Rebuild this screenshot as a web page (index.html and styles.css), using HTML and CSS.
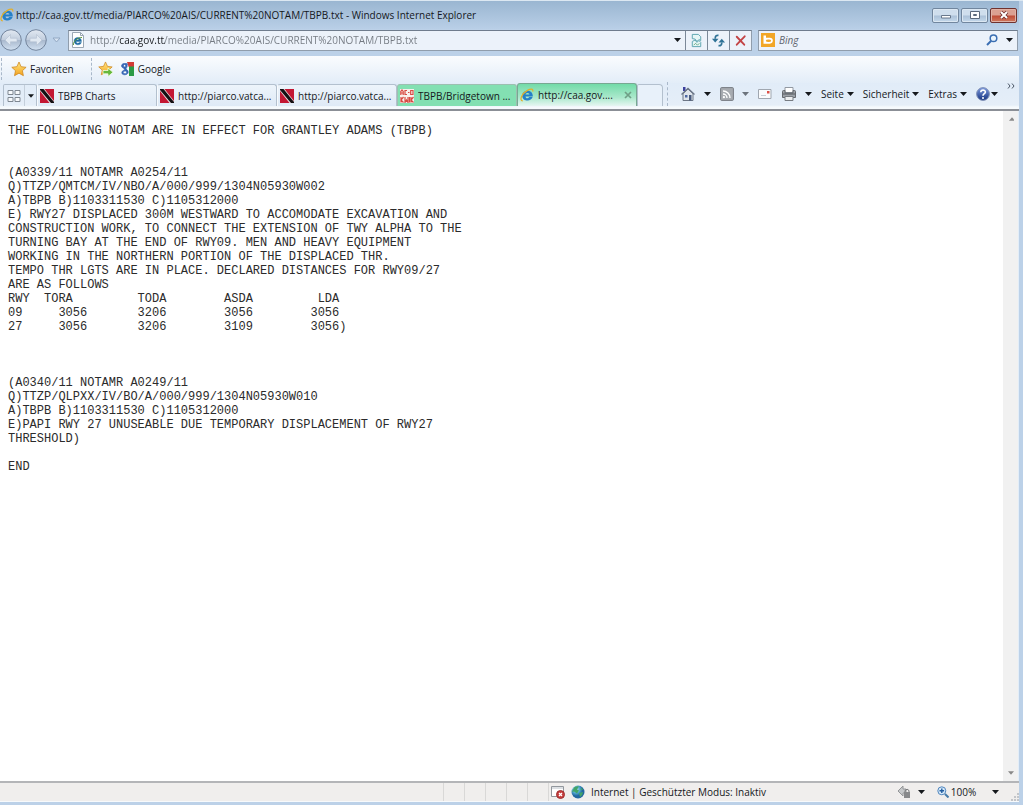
FILE: index.html
```html
<!DOCTYPE html>
<html lang="de">
<head>
<meta charset="utf-8">
<title>http://caa.gov.tt/media/PIARCO%20AIS/CURRENT%20NOTAM/TBPB.txt - Windows Internet Explorer</title>
<link rel="stylesheet" href="styles.css">
</head>
<body>
<svg class="defs" aria-hidden="true">
  <defs>
    <linearGradient id="gold" x2="0" y2="1"><stop offset="0" stop-color="#ffe985"/><stop offset="1" stop-color="#f3a01c"/></linearGradient>
    <linearGradient id="orb" x2="0" y2="1"><stop offset="0" stop-color="#e2e9f2"/><stop offset=".48" stop-color="#c3cfdf"/><stop offset=".52" stop-color="#a9b9ce"/><stop offset="1" stop-color="#d3e2f2"/></linearGradient>
    <radialGradient id="globe" cx=".35" cy=".3"><stop offset="0" stop-color="#c2ecf6"/><stop offset=".6" stop-color="#4da3cd"/><stop offset="1" stop-color="#2367a0"/></radialGradient>
    <linearGradient id="help" x2="0" y2="1"><stop offset="0" stop-color="#7d9be0"/><stop offset="1" stop-color="#15327f"/></linearGradient>
    <symbol id="ie" viewBox="0 0 16 16">
      <path d="M10.600 10.400h3.800C12.800 16.200 2.600 15.600 2.600 8.800 2.600 1 15.200 1 14.600 9.600H6.300c.3 2.600 3.400 2.700 4.300.8zM6.300 7.300h4.500c-.2-2.300-4.300-2.300-4.500 0z" fill="#2580c8"/>
      <path d="M3.200 14.600C-1.500 14.500 2.500 6 8.500 2.700c3.500-2 7-2.200 6 1.300" fill="none" stroke="#e3b02c" stroke-width="1.400"/>
    </symbol>
    <symbol id="flag" viewBox="0 0 14 14">
      <path fill="#c31733" d="M0 0h14v14H0z"/><path d="M0 0h4.500L14 12v2H9.500L0 2z" fill="#e9dfe0"/><path d="M1 0h2.500L14 13v1h-3L0 1V0z" fill="#151013"/>
    </symbol>
    <symbol id="star" viewBox="0 0 16 16"><path d="M8 1l2.100 4.700 5 .6-3.700 3.400 1 5L8 12.200l-4.500 2.500 1-5L.8 6.300l5.100-.6z" fill="url(#gold)" stroke="#cf8a25" stroke-width=".8"/></symbol>
    <symbol id="down" viewBox="0 0 7 4"><path d="M0 0h7L3.500 4z" fill="currentColor"/></symbol>
  </defs>
</svg>

<div class="window">
  <header class="titlebar">
    <svg class="i14"><use href="#ie"/></svg>
    <h1 class="title">http://caa.gov.tt/media/PIARCO%20AIS/CURRENT%20NOTAM/TBPB.txt - Windows Internet Explorer</h1>
    <div class="caption">
      <button aria-label="Minimieren"><svg viewBox="0 0 12 10"><path d="M1.500 5.500h9v2.500h-9z" fill="#fff" stroke="#69788c"/></svg></button>
      <button aria-label="Maximieren"><svg viewBox="0 0 12 10"><path d="M1.500 1.500h9v7h-9z" fill="#fff" stroke="#5c6a7c"/><path d="M4.500 4.500h3v1h-3z" fill="none" stroke="#5c6a7c"/></svg></button>
      <button class="shut" aria-label="Schließen"><svg viewBox="0 0 12 10"><path d="M3 2l6 6M9 2L3 8" stroke="#6d2b2b" stroke-width="3.500"/><path d="M3 2l6 6M9 2L3 8" stroke="#fff" stroke-width="2"/></svg></button>
    </div>
  </header>

  <div class="navbar">
    <div class="travel">
      <button class="orb" aria-label="Zurück"><svg viewBox="0 0 22 22"><circle cx="11" cy="11" r="10.300" fill="url(#orb)" stroke="#74859d"/><path d="M10.500 5.500L5 11l5.500 5.500v-3.700H17V9.200h-6.500z" fill="#e1e9f2" stroke="#b3c0d0" stroke-width=".6"/></svg></button>
      <button class="orb" aria-label="Vorwärts"><svg viewBox="0 0 22 22"><circle cx="11" cy="11" r="10.300" fill="url(#orb)" stroke="#74859d"/><path d="M11.500 5.500L17 11l-5.500 5.500v-3.700H5V9.200h6.500z" fill="#e1e9f2" stroke="#b3c0d0" stroke-width=".6"/></svg></button>
      <button class="recent" aria-label="Zuletzt besuchte Seiten"><svg class="recent-icon" viewBox="0 0 9 6"><path d="M1 1h7L4.500 5z" fill="#d6e3f2" stroke="#93a9c4"/></svg></button>
    </div>
    <div class="address">
      <svg class="i16 page-icon" viewBox="0 0 16 16"><path d="M2.500.5h8l3 3v12h-11z" fill="#fff" stroke="#9aa7b4"/><path d="M10.500.5v3h3" fill="none" stroke="#9aa7b4"/><path d="M11.500 9.500H6c.1 2 2.700 2.200 3.200 1h2.200c-1 3.400-7.400 3-7.400-1.500 0-4.700 7.700-4.700 7.500.5zM6 8h3c-.2-1.500-2.800-1.500-3 0z" fill="#1f6ca3" stroke="#1f6ca3" stroke-width=".4"/><path d="M3.500 13C2.500 10 8 5 12 5.500" fill="none" stroke="#5f9a3e"/></svg>
      <input class="url" type="text" aria-label="Adresse" value="http://caa.gov.tt/media/PIARCO%20AIS/CURRENT%20NOTAM/TBPB.txt">
      <button class="drop" aria-label="Adressliste"><svg class="arrow"><use href="#down"/></svg></button>
      <button class="cell" aria-label="Kompatibilitätsansicht"><svg viewBox="0 0 16 16"><path d="M3.500 6V1.500h6.500l2.500 2.500V8l-2-1-2 2-2-2.500zM3.500 9l3-1.500L8.500 10l2-2 2 2v4.500h-9z" fill="#e6f6f6" stroke="#5aa3ae"/><path d="M5 13l2-2 2 2 2-2" fill="none" stroke="#65aa83"/></svg></button>
      <button class="cell" aria-label="Aktualisieren"><svg viewBox="0 0 16 16"><path d="M8 2.500Q4.500 2 4.500 6M8 13.500q3.500.5 3.500-3.500" fill="none" stroke="#2f7296" stroke-width="1.800"/><path d="M1 6h7l-3.500 4zM8 10l3.500-4L15 10z" fill="#2f7296"/></svg></button>
      <button class="cell" aria-label="Stopp"><svg viewBox="0 0 16 16"><path d="M4 4l8 8.500M12.500 3.500L4 12.500" stroke="#c34446" stroke-width="2" stroke-linecap="round"/></svg></button>
    </div>
    <div class="search">
      <svg class="i14" viewBox="0 0 14 14"><path d="M0 0h14v14H0z" fill="#f2a626"/><path d="M2.500 2.500v8.200h6.300q3-.5 3-3.200T8.800 4.800H5V2.500z" fill="#fff"/><ellipse cx="7.500" cy="7.800" rx="2.700" ry="1.300" fill="#f2a626"/></svg>
      <input class="bing" type="text" placeholder="Bing" aria-label="Bing-Suche">
      <button aria-label="Suchen"><svg class="i12" viewBox="0 0 12 12"><circle cx="7.500" cy="4.300" r="3.300" fill="#e9f4fd" stroke="#3a6eb2" stroke-width="1.500"/><path d="M5 7l-4 4" stroke="#3a6eb2" stroke-width="2"/></svg></button>
      <button aria-label="Suchoptionen"><svg class="arrow"><use href="#down"/></svg></button>
    </div>
  </div>

  <div class="client">
    <div class="favbar">
      <span class="grip"></span>
      <button class="fav"><svg class="i16"><use href="#star"/></svg>Favoriten</button>
      <span class="grip"></span>
      <button class="addfav" aria-label="Zu Favoritenleiste hinzufügen"><svg class="i16" viewBox="0 0 16 16"><use href="#star" width="15" height="15"/><path d="M5 9.500h5V7l5 4.300-5 4.200v-2.700H5z" fill="#66b83c" stroke="#f2ffe6" stroke-width=".8"/></svg></button>
      <a class="link" href="http://www.google.de"><svg class="i16" viewBox="0 0 16 16"><path fill="#d43c36" d="M6 1h9v5H6z"/><path fill="#2c9b45" d="M10 5.500h5V15h-5z"/><path fill="#355fb0" d="M5 9h5v6H5z"/><path fill="#f4f8fd" d="M0 1h8l2 6v8H4L0 9z"/><path d="M7.500 2.500H5.300C1.700 2.500 1.600 7 5 7c-.5 1.300.8 1.600 1.400 2C2 9 1.500 14 5.800 13.800 10 13.500 10 10 7.500 8.300c-1-.6-.3-1 .3-2 .8-1.400.3-2.300-.2-3h1.200zM5.500 3.500c1.600 0 1.700 2.500.3 2.600C4.200 6 4 3.600 5.500 3.500zM6.600 10c2 1.200 1 2.700-.6 2.700-2.500 0-2.500-2.700.6-2.700z" fill="#3565b4" stroke="#3565b4" stroke-width=".7"/></svg>Google</a>
    </div>

    <div class="tabrow">
      <div class="quick">
        <button aria-label="Schnellregisterkarten"><svg class="i14" viewBox="0 0 14 14"><path d="M1 1.500h5v4H1zM8 1.500h5v4H8zM1 8.500h5v4H1zM8 8.500h5v4H8z" fill="#f6f9fc" stroke="#7e8791"/></svg></button>
        <button aria-label="Registerkartenliste"><svg class="arrow small"><use href="#down"/></svg></button>
      </div>
      <nav class="tabs" aria-label="Registerkarten">
        <a class="tab" href="#1"><svg class="i14"><use href="#flag"/></svg><span>TBPB Charts</span></a>
        <a class="tab" href="#2"><svg class="i14"><use href="#flag"/></svg><span>http://piarco.vatca...</span></a>
        <a class="tab" href="#3"><svg class="i14"><use href="#flag"/></svg><span>http://piarco.vatca...</span></a>
        <a class="tab green" href="#4"><svg class="i14" viewBox="0 0 14 14"><path fill="#f8efec" d="M0 0h14v14H0z"/><path d="M.8 6V2.500L2 1l1.200 1.500V6M1 4h2M7 1.500H5v4h2M8 3.500h1.500M10.700 1v5M13 1v5M11 1.500h2M11 5.500h2M1 8v5.500M3.500 8L1 11l2.500 2.500M5 8v5.500L6.500 11 8 13.500V8M9.500 8v5.500M11 8v5.500M13.500 8L11 11l2.500 2.500" fill="none" stroke="#d84b43" stroke-width="1.200"/></svg><span>TBPB/Bridgetown ...</span></a>
        <div class="tab current"><svg class="i14"><use href="#ie"/></svg><span>http://caa.gov....</span><button class="close" aria-label="Registerkarte schließen"><svg viewBox="0 0 8 8"><path d="M1 1l6 6M7 1L1 7" stroke="#6f9f86" stroke-width="1.700"/></svg></button></div>
        <button class="newtab" aria-label="Neue Registerkarte"></button>
      </nav>
      <div class="commands">
        <span class="grip"></span>
        <button class="home" aria-label="Startseite"><svg class="i16" viewBox="0 0 16 16"><path d="M3 1h2.500v4H3z" fill="#3b3f9c"/><path d="M3 7.500L8 3l5 4.500V14.500H3z" fill="#dfe5ec" stroke="#6d7786"/><path d="M1.500 8.500L8 2.500l6.500 6" fill="none" stroke="#6b7688" stroke-width="1.400"/><path d="M5 9h2.500v2.500H5z" fill="#4c68a4"/><path d="M9 9h2.500v5.500H9z" fill="#485a7d"/></svg><svg class="arrow"><use href="#down"/></svg></button>
        <button class="dim" aria-label="Feeds"><svg class="i14" viewBox="0 0 14 14"><rect x=".6" y=".6" width="12.800" height="12.800" rx="1" fill="#a7abb0" stroke="#777c83"/><path d="M3 7a4 4 0 0 1 4 4M3 4a7 7 0 0 1 7 7" fill="none" stroke="#fff" stroke-width="1.400"/><circle cx="3.900" cy="10.200" r="1.100" fill="#fff"/></svg><svg class="arrow"><use href="#down"/></svg></button>
        <button aria-label="E-Mail lesen"><svg class="i14" viewBox="0 0 14 14"><path d="M.5 2.500h12.500v9H.5z" fill="#fafbfc" stroke="#a0a7b0"/><path d="M9 4h2.500v2.500H9z" fill="#dc5148"/><path d="M3 8.500h5" stroke="#c7cdd5"/></svg></button>
        <button aria-label="Drucken"><svg class="i16" viewBox="0 0 16 16"><path d="M4 1.500h8v5H4z" fill="#fff" stroke="#9299a2"/><path d="M1.500 5.500q0-1 1-1H4V7h8V4.500h1.500q1 0 1 1v6h-13z" fill="#9da2a8" stroke="#65696f"/><path d="M2 8h12" stroke="#55595e"/><path d="M4 10.500h8v4H4z" fill="#eceef0" stroke="#777c82"/></svg><svg class="arrow"><use href="#down"/></svg></button>
        <button class="menu">Seite<svg class="arrow"><use href="#down"/></svg></button>
        <button class="menu">Sicherheit<svg class="arrow"><use href="#down"/></svg></button>
        <button class="menu">Extras<svg class="arrow"><use href="#down"/></svg></button>
        <button class="helpbtn" aria-label="Hilfe"><svg class="i14" viewBox="0 0 14 14"><circle cx="7" cy="7" r="6.400" fill="url(#help)" stroke="#8292b7"/><path d="M4.800 5.300c0-3 4.600-2.800 4.600-.3C9.400 6.700 7 6.700 7 8.700" fill="none" stroke="#fff" stroke-width="1.600"/><circle cx="7" cy="10.900" r="1" fill="#fff"/></svg><svg class="arrow"><use href="#down"/></svg></button>
        <button class="more" aria-label="Weitere Befehle"><svg viewBox="0 0 8 6"><path d="M1 .5L3 3 1 5.500M5 .5L7 3 5 5.500" fill="none" stroke="#4c5766"/></svg></button>
      </div>
    </div>

    <main class="view">
<pre class="notam">THE FOLLOWING NOTAM ARE IN EFFECT FOR GRANTLEY ADAMS (TBPB)


(A0339/11 NOTAMR A0254/11
Q)TTZP/QMTCM/IV/NBO/A/000/999/1304N05930W002
A)TBPB B)1103311530 C)1105312000
E) RWY27 DISPLACED 300M WESTWARD TO ACCOMODATE EXCAVATION AND
CONSTRUCTION WORK, TO CONNECT THE EXTENSION OF TWY ALPHA TO THE
TURNING BAY AT THE END OF RWY09. MEN AND HEAVY EQUIPMENT
WORKING IN THE NORTHERN PORTION OF THE DISPLACED THR.
TEMPO THR LGTS ARE IN PLACE. DECLARED DISTANCES FOR RWY09/27
ARE AS FOLLOWS
RWY  TORA         TODA        ASDA         LDA
09     3056       3206        3056        3056
27     3056       3206        3109        3056)



(A0340/11 NOTAMR A0249/11
Q)TTZP/QLPXX/IV/BO/A/000/999/1304N05930W010
A)TBPB B)1103311530 C)1105312000
E)PAPI RWY 27 UNUSEABLE DUE TEMPORARY DISPLACEMENT OF RWY27
THRESHOLD)

END</pre>
      <div class="scrollbar">
        <button aria-label="Nach oben"><svg class="arrow small"><use href="#down" transform="rotate(180 3.500 2)"/></svg></button>
        <button aria-label="Nach unten"><svg class="arrow small"><use href="#down"/></svg></button>
      </div>
    </main>

    <footer class="status">
      <div class="panes"><i></i><i></i><i></i><i></i><i></i></div>
      <div class="zone">
        <svg class="i14" viewBox="0 0 14 14"><path d="M.5 1.500h12v10H.5z" fill="#fff" stroke="#92979d"/><path d="M1 3h11" stroke="#b8bec6"/><circle cx="9.500" cy="9.500" r="4" fill="#c73c3c" stroke="#9d3030"/><path d="M8 8l3 3M11 8l-3 3" stroke="#fff" stroke-width="1.300"/></svg>
        <svg class="i14" viewBox="0 0 14 14"><circle cx="7" cy="7" r="6.500" fill="url(#globe)"/><path d="M3 2.500q3-2 5-1L6 4.500l2 1-2 3-3-2L1 7zM8 8l4-1q0 3-3 5zM10 2.500l2 2-2 1z" fill="#42a468"/></svg>
        <span>Internet | Geschützter Modus: Inaktiv</span>
      </div>
      <button class="filter" aria-label="InPrivate-Filterung"><svg class="i14" viewBox="0 0 14 14"><path d="M6 1L1 6l5 5V8h3V4H6z" fill="#c6c8ca" stroke="#949698"/><path d="M8 7V5.500q2.200-2.500 4 0V7" fill="none" stroke="#737577"/><path d="M7 7h6v6H7z" fill="#88898b"/></svg><svg class="arrow"><use href="#down"/></svg></button>
      <button class="zoom"><svg class="i12" viewBox="0 0 12 12"><circle cx="4.800" cy="4.800" r="4" fill="#d7eafa" stroke="#5186bd"/><path d="M4.800 2.500v4.600M2.500 4.800h4.600" stroke="#235d9f" stroke-width="1.400"/><path d="M8 8l3.500 3.500" stroke="#477ba9" stroke-width="2"/></svg><span>100%</span><svg class="arrow"><use href="#down"/></svg></button>
      <svg class="size" viewBox="0 0 8 8"><path d="M6 0h2v2H6zM3 3h2v2H3zM6 3h2v2H6zM0 6h2v2H0zM3 6h2v2H3zM6 6h2v2H6z" fill="#c3c5c9"/></svg>
    </footer>
  </div>
</div>
</body>
</html>
```
FILE: styles.css
```css
* { box-sizing: border-box; }
body { margin: 0; font: 10px/16px "Open Sans", "Noto Sans", sans-serif; color: #15181c; }
button { display: flex; align-items: center; justify-content: center; margin: 0; padding: 0; border: 0; background: none; font: inherit; color: inherit; }
input { min-width: 0; padding: 0; border: 0; outline: 0; background: none; font: inherit; }
a { color: inherit; text-decoration: none; }
svg { display: block; flex: none; }
.defs { position: absolute; width: 0; height: 0; }
.i12 { width: 12px; height: 12px; }
.i14 { width: 14px; height: 14px; }
.i16 { width: 16px; height: 16px; }
.arrow { width: 7px; height: 4px; }
.small { width: 6px; height: 4px; }
.grip { align-self: stretch; margin: 2px 0; border-left: 1px dashed #a9b8ca; }

.window { display: flex; flex-direction: column; min-height: 100vh; padding: 0 4px 3px 0; background: #bcd1e8; border-top: 1px solid #dce8f2; }
.titlebar { display: flex; align-items: center; gap: 2px; height: 28px; background: linear-gradient(#9ab6d1, #b9cfe7); }
.title { flex: 1; margin: 0; font-size: 10px; font-weight: 400; white-space: nowrap; }
.caption { display: flex; gap: 2px; padding-right: 2px; }
.caption button { width: 27px; height: 15px; border: 1px solid #71869e; border-radius: 2px; background: linear-gradient(#cfdeed 48%, #abc1d8 52%, #c4d8eb); box-shadow: inset 0 0 0 1px #dbe7f2; }
.caption svg { width: 12px; height: 10px; }
.caption .shut { border-color: #70322f; background: linear-gradient(#dba092 48%, #bf4a35 52%, #cf7a60); box-shadow: inset 0 0 0 1px #e0b2a6; }

.navbar { display: flex; align-items: center; height: 27px; padding: 0 1px 5px 0; }
.travel { display: flex; align-items: center; width: 68px; gap: 3px; }
.orb svg { width: 22px; height: 22px; }
.recent { padding-left: 2px; }
.recent-icon { width: 9px; height: 6px; }
.address, .search { display: flex; align-items: center; height: 21px; background: #ecf2fa; border: 1px solid #909dac; border-top-color: #6f7c8d; }
.address { flex: 1; }
.page-icon { margin: 0 4px 0 1px; }
/* scheme and path are greyed, the domain stands out */
.url { flex: 1; color: #747a82; background: linear-gradient(90deg, #747a82 29px, #15181c 29px, #15181c 75px, #747a82 75px); -webkit-background-clip: text; background-clip: text; -webkit-text-fill-color: transparent; }
.drop { width: 16px; align-self: stretch; }
.cell { width: 22px; align-self: stretch; border-left: 1px solid #7b8898; }
.cell svg { width: 15px; height: 15px; }
.search { width: 260px; margin-left: 6px; gap: 4px; padding: 0 4px 0 2px; }
.bing { flex: 1; font-style: italic; }
.bing::placeholder { color: #5f656d; opacity: 1; }
.search button { margin-left: 4px; }

.client { flex: 1; display: flex; flex-direction: column; background: #e2edf8; }
.favbar { display: flex; align-items: center; height: 27px; padding: 0 0 1px 1px; background: linear-gradient(#fafcfe, #e3edf8); }
.fav { gap: 3px; margin: 0 17px 0 9px; }
.addfav { margin: 0 5px 0 6px; }
.link { display: flex; align-items: center; gap: 3px; }

.tabrow { display: flex; align-items: flex-end; height: 28px; padding-bottom: 3px; border-bottom: 2px solid #8b8f96; background: linear-gradient(#e1ecf8, #e5eef8 22px, #f6fafd 24px); }
.quick { display: flex; height: 22px; margin-left: 3px; border: 1px solid #b3c0ce; border-bottom: 0; border-radius: 2px 2px 0 0; }
.quick button { width: 20px; }
.quick button + button { width: 12px; border-left: 1px solid #c4cfdb; }
.tabs { flex: 1; display: flex; align-items: flex-end; min-width: 0; }
.tab { display: flex; align-items: center; gap: 4px; flex: 0 1 120px; min-width: 0; height: 22px; padding: 0 2px; border: 1px solid #b3c0ce; border-left-color: #f7fafd; border-bottom: 0; border-radius: 3px 3px 0 0; background: linear-gradient(#edf4fb, #dfeaf6); white-space: nowrap; }
.tab span { overflow: hidden; flex: 1; }
.green { background: #83e0b2; border-color: #9dbfb0; }
.current { height: 23px; background: linear-gradient(#72dba8, #a9e8cb 60%, #e6f6f2); border: 1px solid #77a892; border-bottom: 0; }
.close svg { width: 8px; height: 8px; margin-right: 2px; }
.newtab { width: 26px; height: 22px; border: 1px solid #b3c0ce; border-bottom: 0; border-radius: 2px 4px 0 0; background: #e8f1fa; }
.commands { display: flex; align-items: center; height: 24px; gap: 9px; padding: 0 4px 0 0; }
.commands button { gap: 8px; }
.commands .grip { margin: 0 3px 0 0; }
.commands .menu { gap: 3px; }
.commands .helpbtn { gap: 1px; }
.dim .arrow { color: #6c737c; }
.commands .more { align-self: flex-start; padding-top: 1px; }
.more svg { width: 8px; height: 6px; }

.view { flex: 1; display: flex; background: #fff; margin-right: 1px; }
.notam { flex: 1; margin: 0; padding: 13px 8px; font: 12px/14px "Liberation Mono", "Courier New", monospace; color: #2b2b2b; }
.scrollbar { display: flex; flex-direction: column; justify-content: space-between; width: 15px; background: #f1f1f1; color: #888; }
.scrollbar button { height: 16px; }

.status { display: flex; align-items: center; justify-content: flex-end; height: 21px; background: #f0eeed; border-top: 2px solid #b4b5b8; border-bottom: 1px solid #f7fafc; }
.status > * { flex: none; }
.panes { display: flex; align-self: stretch; }
.panes i { width: 21px; border-left: 1px solid #d9d8d7; }
.zone { display: flex; align-items: center; gap: 6px; align-self: stretch; width: 343px; padding-left: 2px; border-left: 1px solid #d9d8d7; }
.filter { gap: 7px; width: 40px; align-self: stretch; }
.zoom { gap: 2px; width: 74px; align-self: stretch; }
.zoom .arrow { margin-left: 14px; }
.size { width: 8px; height: 8px; align-self: flex-end; margin-left: 6px; }
```
